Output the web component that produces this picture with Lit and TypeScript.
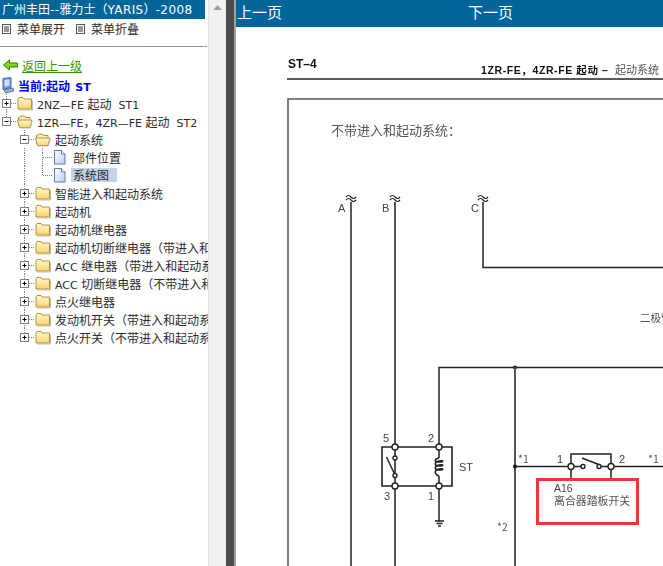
import { LitElement, html, css, svg } from "lit";
import { customElement } from "lit/decorators.js";

type Conn = "plus" | "minus" | "tee" | "corner" | "line" | "blank";

const mixed = (s: string) =>
  s.split(/([A-Za-z0-9 \-—:]+)/).map((p, i) => (i % 2 ? html`<span class="lat">${p}</span>` : p));

const conn = (k: Conn, bottom = true) => html`<svg class="cell" width="18" height="18" viewBox="0 0 18 18">
  ${k === "blank" ? "" : svg`
    <line x1="6.5" y1="0" x2="6.5" y2="${k === "corner" ? 9 : 5}" class="dot"></line>
    ${k === "line" || k === "tee" ? svg`<line x1="6.5" y1="5" x2="6.5" y2="18" class="dot"></line>` : ""}
    ${k === "plus" && bottom ? svg`<line x1="6.5" y1="13" x2="6.5" y2="18" class="dot"></line>` : ""}
    ${k !== "line" ? svg`<line x1="7" y1="9.5" x2="17" y2="9.5" class="dot"></line>` : ""}
    ${k === "plus" || k === "minus" ? svg`
      <rect x="2.5" y="5.5" width="8" height="8" fill="#fff" stroke="#808080"></rect>
      <path d="M4.5 9.5h4" stroke="#000" fill="none"></path>
      ${k === "plus" ? svg`<path d="M6.5 7.5v4" stroke="#000" fill="none"></path>` : ""}` : ""}
  `}
</svg>`;

const folder = (open = false) => html`<svg class="cell icon-f" width="16" height="18" viewBox="0 0 16 18">
  <defs><linearGradient id="fg" x1="0" y1="0" x2="0" y2="1"><stop offset="0" stop-color="#fff8d8"></stop><stop offset="1" stop-color="#fcd468"></stop></linearGradient></defs>
  ${open
    ? svg`<path d="M1.5 13.5v-8h1l1-1.5h4l1 1.500h4.500v2" fill="#fdeeb8" stroke="#b59238"></path><path d="M0.5 8h14.500l-2 7.500H2.500z" fill="url(#fg)" stroke="#b59238"></path><path d="M15 9l-1.500 7H3" stroke="#bbb" fill="none"></path>`
    : svg`<path d="M1 15V5l1-1.500h4l1 1.500h7.500v10z" fill="url(#fg)" stroke="#b59238" stroke-linejoin="round"></path><path d="M15.500 6.500v9.500h-13.500" stroke="#bbb" fill="none"></path>`}
</svg>`;

const doc = html`<svg class="cell" width="16" height="18" viewBox="0 0 16 18">
  <defs><linearGradient id="dg" x1="0" y1="0" x2="1" y2="1"><stop offset="0" stop-color="#fff"></stop><stop offset="1" stop-color="#b7d2f2"></stop></linearGradient></defs>
  <path d="M0.500 2.500h7l3.500 3.500v10h-10.500z" fill="url(#dg)" stroke="#5b7aa8"></path>
  <path d="M7.500 2.500v3.500h3.500" fill="#fff" stroke="#5b7aa8"></path>
</svg>`;

const menuIcon = html`<svg width="9" height="10" viewBox="0 0 9 10"><rect x="0.500" y="0.500" width="8" height="9" fill="#fff" stroke="#555"></rect><path d="M2 3h5M2 5h5M2 7h5" stroke="#333" fill="none"></path></svg>`;

const rows: { cells: Conn[]; icon: any; label: string; sel?: boolean }[] = [
  { cells: ["plus"], icon: folder(), label: "2NZ—FE 起动  ST1" },
  { cells: ["minus"], icon: folder(true), label: "1ZR—FE，4ZR—FE 起动  ST2" },
  { cells: ["blank", "minus"], icon: folder(true), label: "起动系统" },
  { cells: ["blank", "line", "tee"], icon: doc, label: "部件位置" },
  { cells: ["blank", "line", "corner"], icon: doc, label: "系统图", sel: true },
  { cells: ["blank", "plus"], icon: folder(), label: "智能进入和起动系统" },
  { cells: ["blank", "plus"], icon: folder(), label: "起动机" },
  { cells: ["blank", "plus"], icon: folder(), label: "起动机继电器" },
  { cells: ["blank", "plus"], icon: folder(), label: "起动机切断继电器（带进入和起动系统）" },
  { cells: ["blank", "plus"], icon: folder(), label: "ACC 继电器（带进入和起动系统）" },
  { cells: ["blank", "plus"], icon: folder(), label: "ACC 切断继电器（不带进入和起动系统）" },
  { cells: ["blank", "plus"], icon: folder(), label: "点火继电器" },
  { cells: ["blank", "plus"], icon: folder(), label: "发动机开关（带进入和起动系统）" },
  { cells: ["blank", "plus"], icon: folder(), label: "点火开关（不带进入和起动系统）" },
];

@customElement("app-root")
export class AppRoot extends LitElement {
  static styles = css`
    :host { display: block; width: 663px; height: 566px; overflow: hidden; font-family: "Noto Sans CJK SC", sans-serif; font-size: 12px; color: #2c2c2c; background: #fff; }
    .page { display: grid; grid-template-columns: 208px 18px 8px 2px 1fr; height: 566px; }
    .side { overflow: hidden; display: flex; flex-direction: column; background: #fff; }
    .lat { font-family: "DejaVu Sans", sans-serif; font-size: 11px; white-space: pre; }
    .title { width: 205px; height: 19px; box-sizing: border-box; background: #006699; color: #fff; padding-left: 2px; line-height: 18px; white-space: nowrap; overflow: hidden; }
    .title .lat { font-size: 12px; letter-spacing: 0.4px; }
    .menu { display: flex; align-items: center; height: 18px; padding-left: 2px; }
    .menu svg { margin: 2px 6px 0 0; flex: none; }
    .menu span { margin-right: 11px; }
    .sep { height: 1px; background: #999; margin-top: 9px; width: 207px; }
    .back { display: flex; align-items: center; height: 18px; margin-top: 9px; padding-left: 3px; gap: 4px; }
    .back a { color: #339900; text-decoration: underline; }
    .cur { display: flex; align-items: center; height: 18px; margin-top: 2px; padding-left: 2px; gap: 4px; color: #0000ff; font-weight: 700; white-space: pre; }
    .cur .lat { font-weight: 700; }
    .row { display: flex; align-items: center; height: 18px; white-space: nowrap; width: 400px; }
    .cell { flex: none; display: block; }
    .icon-f { margin-left: -1px; margin-right: 1px; }
    .label { margin-left: 3px; white-space: pre; }
    .sel { background: #c2d3ea; margin-left: 1px; padding: 0 8px 0 2px; line-height: 14px; }
    .dot { stroke: #808080; stroke-dasharray: 1 1; }
    .track { background: #f1f1f1; border-left: 1px solid #e4e4e4; display: flex; justify-content: center; padding-top: 5px; align-items: flex-start; box-sizing: border-box; }
    .bar { background: #4d4d4d; }
    .bar2 { background: #a0a0a0; }
    .main { display: flex; flex-direction: column; min-width: 0; overflow: hidden; }
    .nav { height: 27px; flex: none; background: #006699; color: #fff; font-size: 15px; line-height: 23px; display: flex; padding-left: 1px; }
    .nav span { width: 231px; flex: none; }
    .sheet { display: block; flex: none; filter: blur(0.4px); }
    .sheet text { font-family: "Liberation Sans", "Noto Sans CJK SC", sans-serif; fill: #444; }
    .sheet .cn { font-family: "Noto Sans CJK SC", sans-serif; fill: #555; }
    .sheet .dk { fill: #111; font-weight: 700; }
    .sheet .w { stroke: #222; stroke-width: 1.5; fill: none; }
    .sheet .thin { stroke-width: 1.2; }
    .sheet .g { stroke: #555; stroke-width: 2; fill: none; }
    .sheet .c { fill: #fff; stroke: #222; stroke-width: 1.4; }
    .sheet .b { fill: #111; }
  `;

  render() {
    const wave = (x: number) => svg`<path fill="#fff" stroke="none" d="M${x - 5} 194h11v8h-11z"></path><path class="w thin" d="M${x - 5} 197q2.500 -3 5 0t5 0M${x - 5} 200q2.500 -3 5 0t5 0"></path>`;
    return html`<div class="page">
      <div class="side">
        <div class="title">${mixed("广州丰田--雅力士（YARIS）-2008")}</div>
        <div class="menu">
          ${menuIcon}<span>菜单展开</span>
          ${menuIcon}<span>菜单折叠</span>
        </div>
        <div class="sep"></div>
        <div class="back">
          <svg width="15" height="12" viewBox="0 0 15 12"><path d="M0.500 6l6-5v3h8v4h-8v3z" fill="#7ed321" stroke="#2f7d0a"></path></svg>
          <a>返回上一级</a>
        </div>
        <div class="cur">
          <svg width="12" height="17" viewBox="0 0 12 17"><path d="M1 1.500l8-1v10l-8 2z" fill="#6f9fe8" stroke="#3f66aa"></path><path d="M2.500 3l5-.5v6l-5 1z" fill="#cfe0fa"></path><path d="M2 13l9-2 .5 3-8 2z" fill="#9fb3d6" stroke="#5f7398"></path></svg>
          <span>当前:起动  <span class="lat">ST</span></span>
        </div>
        <div class="tree">
          ${rows.map((r, i) => html`<div class="row">
            ${r.cells.map((c) => conn(c, i !== rows.length - 1))}
            ${r.icon}
            <span class="label ${r.sel ? "sel" : ""}">${mixed(r.label)}</span>
          </div>`)}
        </div>
      </div>
      <div class="track"><svg width="9" height="5" viewBox="0 0 9 5"><path d="M4.500 0l4.500 5h-9z" fill="#a3a3a3"></path></svg></div>
      <div class="bar"></div>
      <div class="bar2"></div>
      <div class="main">
        <div class="nav"><span>上一页</span><span>下一页</span></div>
        <svg class="sheet" width="427" height="539" viewBox="236 27 427 539">
          <text x="288" y="68" font-size="12" class="dk">ST–4</text>
          <text x="481" y="74" font-size="10.500" letter-spacing="0.6" class="dk">1ZR-FE，4ZR-FE 起动 –</text>
          <text x="615" y="74" font-size="11" class="cn">起动系统</text>
          <path d="M287 79h376" stroke="#222" stroke-width="1.500" fill="none"></path>
          <path d="M288 566V99h375" stroke="#555" stroke-width="1.500" fill="none"></path>
          <text x="331" y="135" font-size="13" class="cn">不带进入和起动系统：</text>

          <path class="w" d="M351 198V566"></path>
          <path class="g" d="M395 198V566"></path>
          <path class="w" d="M483 198V267.500H663"></path>
          ${wave(351)}${wave(395)}${wave(483)}
          <text x="338" y="212" font-size="11">A</text>
          <text x="382" y="212" font-size="11">B</text>
          <text x="471" y="212" font-size="11">C</text>
          <text x="640" y="322" font-size="10.500" class="cn">二极管</text>

          <path class="w" d="M439 447V367.500H663"></path>
          <circle class="b" cx="515" cy="367.500" r="2"></circle>
          <path class="g" d="M515 367V566"></path>

          <path class="w" style="stroke-width:1.600" d="M382 447h70v39h-70z"></path>
          <path class="w" d="M439 447v11M439 476v46"></path>
          <path class="w" d="M439 458c-5 1 -5 4 0 4c5 0 5 -2 0 -1c-5 1 -5 5 0 5c5 0 5 -2 0 -1c-5 1 -5 5 0 5c5 0 5 -2 0 -1c-5 1 -5 5 0 7"></path>
          <path class="w" d="M435 521h9M436.500 523.500h6M438 526h3"></path>
          <path class="w" d="M386.500 457L395 475"></path>
          <circle class="c" cx="395" cy="458" r="2"></circle>
          <circle class="c" cx="395" cy="475.500" r="2"></circle>
          <circle class="c" cx="395" cy="447" r="3"></circle>
          <circle class="c" cx="439" cy="447" r="3"></circle>
          <circle class="c" cx="395" cy="486" r="3"></circle>
          <circle class="c" cx="439" cy="486" r="3"></circle>
          <text x="383" y="442" font-size="11">5</text>
          <text x="428" y="442" font-size="11">2</text>
          <text x="384" y="500" font-size="11">3</text>
          <text x="428" y="500" font-size="11">1</text>
          <text x="459" y="471" font-size="11">ST</text>

          <circle class="b" cx="515" cy="466.500" r="2"></circle>
          <path class="w" d="M515 466.500H583M599 466.500H663M571 466V454H611V466M571 467V479M611 467V479"></path>
          <path class="w" d="M582 458L600 465"></path>
          <circle class="c" cx="571" cy="466.500" r="3"></circle>
          <circle class="c" cx="611" cy="466.500" r="3"></circle>
          <circle class="c" cx="583" cy="466.500" r="2"></circle>
          <circle class="c" cx="599" cy="466.500" r="2"></circle>
          <text x="518" y="463" font-size="10.500" class="cn">*1</text>
          <text x="557" y="463" font-size="11">1</text>
          <text x="619" y="463" font-size="11">2</text>
          <text x="648" y="463" font-size="10.500" class="cn">*1</text>
          <text x="497" y="531" font-size="10.500" class="cn">*2</text>
          <rect x="537.500" y="479.500" width="100" height="44" fill="#fff" stroke="#f03535" stroke-width="3"></rect>
          <text x="554" y="492" font-size="10.500">A16</text>
          <text x="554" y="504.500" font-size="10.900" class="cn">离合器踏板开关</text>
        </svg>
      </div>
    </div>`;
  }
}
